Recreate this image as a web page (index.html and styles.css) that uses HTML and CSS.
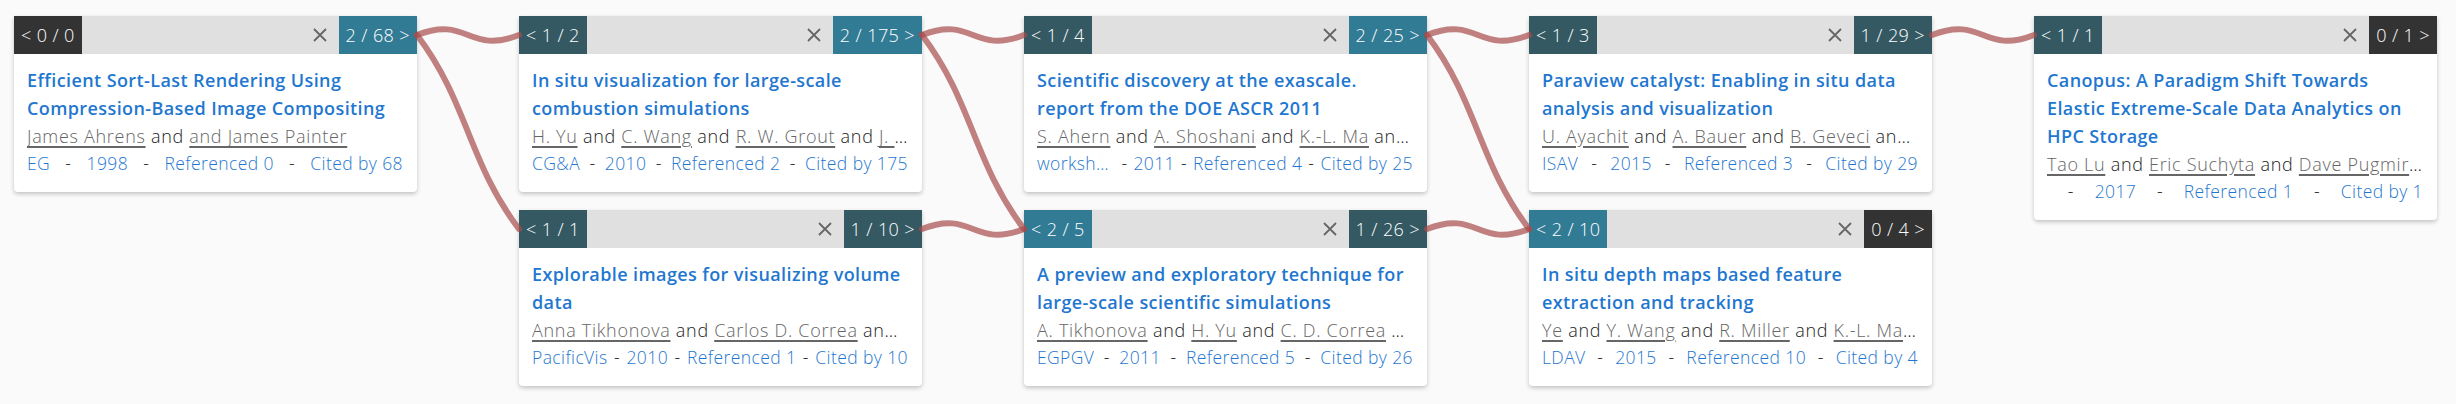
FILE: index.html
```html
<!DOCTYPE html>
<html lang="en">
<head>
    <meta charset="UTF-8">
    <meta name="viewport" content="width=device-width, initial-scale=1.0">
    <title>Citation Path</title>
    <link rel="stylesheet" href="styles.css">
</head>
<body>
    <div class="graph" id="graph">
        <div class="column">
            <div class="card" id="p1">
                <div class="card-head">
                    <span class="nav nav-none">&lt; 0 / 0</span>
                    <span class="close"><svg viewBox="0 0 14 14" width="14" height="14"><path d="M1 1 L13 13 M13 1 L1 13"/></svg></span>
                    <span class="nav nav-multi">2 / 68 &gt;</span>
                </div>
                <div class="card-body">
                    <a class="title" href="#">Efficient Sort-Last Rendering Using Compression-Based Image Compositing</a>
                    <div class="authors"><a href="#">James Ahrens</a> and <a href="#">and James Painter</a></div>
                    <div class="meta">
                        <a class="venue" href="#">EG</a><span>-</span><a href="#">1998</a><span>-</span><a href="#">Referenced 0</a><span>-</span><a href="#">Cited by 68</a>
                    </div>
                </div>
            </div>
        </div>

        <div class="column">
            <div class="card" id="p2">
                <div class="card-head">
                    <span class="nav nav-one">&lt; 1 / 2</span>
                    <span class="close"><svg viewBox="0 0 14 14" width="14" height="14"><path d="M1 1 L13 13 M13 1 L1 13"/></svg></span>
                    <span class="nav nav-multi">2 / 175 &gt;</span>
                </div>
                <div class="card-body">
                    <a class="title" href="#">In situ visualization for large-scale combustion simulations</a>
                    <div class="authors"><a href="#">H. Yu</a> and <a href="#">C. Wang</a> and <a href="#">R. W. Grout</a> and <a href="#">J. H. Chen</a> and <a href="#">K.-L. Ma</a></div>
                    <div class="meta">
                        <a class="venue" href="#">CG&amp;A</a><span>-</span><a href="#">2010</a><span>-</span><a href="#">Referenced 2</a><span>-</span><a href="#">Cited by 175</a>
                    </div>
                </div>
            </div>
            <div class="card" id="p2b">
                <div class="card-head">
                    <span class="nav nav-one">&lt; 1 / 1</span>
                    <span class="close"><svg viewBox="0 0 14 14" width="14" height="14"><path d="M1 1 L13 13 M13 1 L1 13"/></svg></span>
                    <span class="nav nav-one">1 / 10 &gt;</span>
                </div>
                <div class="card-body">
                    <a class="title" href="#">Explorable images for visualizing volume data</a>
                    <div class="authors"><a href="#">Anna Tikhonova</a> and <a href="#">Carlos D. Correa</a> and <a href="#">Kwan-Liu Ma</a></div>
                    <div class="meta">
                        <a class="venue" href="#">PacificVis</a><span>-</span><a href="#">2010</a><span>-</span><a href="#">Referenced 1</a><span>-</span><a href="#">Cited by 10</a>
                    </div>
                </div>
            </div>
        </div>

        <div class="column">
            <div class="card" id="p3">
                <div class="card-head">
                    <span class="nav nav-one">&lt; 1 / 4</span>
                    <span class="close"><svg viewBox="0 0 14 14" width="14" height="14"><path d="M1 1 L13 13 M13 1 L1 13"/></svg></span>
                    <span class="nav nav-multi">2 / 25 &gt;</span>
                </div>
                <div class="card-body">
                    <a class="title" href="#">Scientific discovery at the exascale. report from the DOE ASCR 2011</a>
                    <div class="authors"><a href="#">S. Ahern</a> and <a href="#">A. Shoshani</a> and <a href="#">K.-L. Ma</a> and <a href="#">A. Choudhary</a></div>
                    <div class="meta">
                        <a class="venue" href="#">workshop on exascale data management</a><span>-</span><a href="#">2011</a><span>-</span><a href="#">Referenced 4</a><span>-</span><a href="#">Cited by 25</a>
                    </div>
                </div>
            </div>
            <div class="card" id="p3b">
                <div class="card-head">
                    <span class="nav nav-multi">&lt; 2 / 5</span>
                    <span class="close"><svg viewBox="0 0 14 14" width="14" height="14"><path d="M1 1 L13 13 M13 1 L1 13"/></svg></span>
                    <span class="nav nav-one">1 / 26 &gt;</span>
                </div>
                <div class="card-body">
                    <a class="title" href="#">A preview and exploratory technique for large-scale scientific simulations</a>
                    <div class="authors"><a href="#">A. Tikhonova</a> and <a href="#">H. Yu</a> and <a href="#">C. D. Correa</a> and <a href="#">J. H. Chen</a></div>
                    <div class="meta">
                        <a class="venue" href="#">EGPGV</a><span>-</span><a href="#">2011</a><span>-</span><a href="#">Referenced 5</a><span>-</span><a href="#">Cited by 26</a>
                    </div>
                </div>
            </div>
        </div>

        <div class="column">
            <div class="card" id="p4">
                <div class="card-head">
                    <span class="nav nav-one">&lt; 1 / 3</span>
                    <span class="close"><svg viewBox="0 0 14 14" width="14" height="14"><path d="M1 1 L13 13 M13 1 L1 13"/></svg></span>
                    <span class="nav nav-one">1 / 29 &gt;</span>
                </div>
                <div class="card-body">
                    <a class="title" href="#">Paraview catalyst: Enabling in situ data analysis and visualization</a>
                    <div class="authors"><a href="#">U. Ayachit</a> and <a href="#">A. Bauer</a> and <a href="#">B. Geveci</a> and <a href="#">P. O'Leary</a></div>
                    <div class="meta">
                        <a class="venue" href="#">ISAV</a><span>-</span><a href="#">2015</a><span>-</span><a href="#">Referenced 3</a><span>-</span><a href="#">Cited by 29</a>
                    </div>
                </div>
            </div>
            <div class="card" id="p4b">
                <div class="card-head">
                    <span class="nav nav-multi">&lt; 2 / 10</span>
                    <span class="close"><svg viewBox="0 0 14 14" width="14" height="14"><path d="M1 1 L13 13 M13 1 L1 13"/></svg></span>
                    <span class="nav nav-none">0 / 4 &gt;</span>
                </div>
                <div class="card-body">
                    <a class="title" href="#">In situ depth maps based feature extraction and tracking</a>
                    <div class="authors"><a href="#">Ye</a> and <a href="#">Y. Wang</a> and <a href="#">R. Miller</a> and <a href="#">K.-L. Ma</a> and <a href="#">D. Pugmire</a></div>
                    <div class="meta">
                        <a class="venue" href="#">LDAV</a><span>-</span><a href="#">2015</a><span>-</span><a href="#">Referenced 10</a><span>-</span><a href="#">Cited by 4</a>
                    </div>
                </div>
            </div>
        </div>

        <div class="column">
            <div class="card" id="p5">
                <div class="card-head">
                    <span class="nav nav-one">&lt; 1 / 1</span>
                    <span class="close"><svg viewBox="0 0 14 14" width="14" height="14"><path d="M1 1 L13 13 M13 1 L1 13"/></svg></span>
                    <span class="nav nav-none">0 / 1 &gt;</span>
                </div>
                <div class="card-body">
                    <a class="title" href="#">Canopus: A Paradigm Shift Towards Elastic Extreme-Scale Data Analytics on HPC Storage</a>
                    <div class="authors"><a href="#">Tao Lu</a> and <a href="#">Eric Suchyta</a> and <a href="#">Dave Pugmire</a> and <a href="#">Jong Choi</a></div>
                    <div class="meta">
                        <a class="venue" href="#"></a><span>-</span><a href="#">2017</a><span>-</span><a href="#">Referenced 1</a><span>-</span><a href="#">Cited by 1</a>
                    </div>
                </div>
            </div>
        </div>

        <svg class="links" id="links"></svg>
    </div>

    <script>
        const LINKS = [
            ["p1", "p2"], ["p1", "p2b"],
            ["p2", "p3"], ["p2", "p3b"], ["p2b", "p3b"],
            ["p3", "p4"], ["p3", "p4b"], ["p3b", "p4b"],
            ["p4", "p5"]
        ];

        function drawLinks() {
            const graph = document.getElementById("graph");
            const svg = document.getElementById("links");
            const box = graph.getBoundingClientRect();
            svg.setAttribute("width", box.width);
            svg.setAttribute("height", box.height);
            svg.innerHTML = "";

            LINKS.forEach(([from, to]) => {
                const a = document.querySelector(`#${from} .card-head`).getBoundingClientRect();
                const b = document.querySelector(`#${to} .card-head`).getBoundingClientRect();
                const x1 = a.right - box.left, y1 = a.top + a.height / 2 - box.top;
                const x2 = b.left - box.left, y2 = b.top + b.height / 2 - box.top;
                const w = x2 - x1, dy = y2 - y1;
                const d = `M${x1},${y1} C${x1 + w / 2},${y1 + dy * 0.45 - 20} ${x2 - w / 2},${y2 - dy * 0.45 + 20} ${x2},${y2}`;
                const path = document.createElementNS("http://www.w3.org/2000/svg", "path");
                path.setAttribute("d", d);
                svg.appendChild(path);
            });
        }

        drawLinks();
    </script>
</body>
</html>
```

FILE: styles.css
```css
body {
    margin: 0;
    background-color: #fafafa;
    font-family: 'Open Sans', 'Lato', sans-serif;
    color: #222;
}

a {
    text-decoration: none;
}

.graph {
    position: relative;
    display: flex;
    align-items: flex-start;
    gap: 102px;
    padding: 16px 14px;
}

.column {
    display: flex;
    flex-direction: column;
    gap: 18px;
    width: 403px;
    flex: none;
}

.card {
    background-color: #ffffff;
    border-radius: 0 0 4px 4px;
    box-shadow: 0 2px 4px rgba(0, 0, 0, 0.22);
}

.card-head {
    display: flex;
    align-items: center;
    height: 38px;
    background-color: #e0e0e0;
}

.nav {
    padding: 0 7px;
    line-height: 38px;
    font-size: 18px;
    font-weight: 300;
    letter-spacing: 0.4px;
    color: #ffffff;
    white-space: nowrap;
}

.nav-none {
    background-color: #333333;
}

.nav-one {
    background-color: #345963;
}

.nav-multi {
    background-color: #327b95;
}

.close {
    margin-left: auto;
    margin-right: 12px;
    display: flex;
}

.close path {
    stroke: #666;
    stroke-width: 1.8;
    fill: none;
}

.card-body {
    padding: 12px 14px 15px 13px;
}

.title {
    display: block;
    font-size: 18px;
    font-weight: 600;
    letter-spacing: 0.4px;
    line-height: 28px;
    color: #1f77d0;
}

.authors {
    font-size: 18px;
    font-weight: 300;
    letter-spacing: 0.7px;
    line-height: 28px;
    white-space: nowrap;
    overflow: hidden;
    text-overflow: ellipsis;
}

.authors a {
    color: #666;
    text-decoration: underline;
    text-decoration-thickness: 1.5px;
    text-underline-offset: 3px;
}

.meta {
    display: flex;
    justify-content: space-between;
    gap: 6px;
    font-size: 17.5px;
    font-weight: 300;
    letter-spacing: 0.4px;
    line-height: 27px;
    white-space: nowrap;
}

.meta a {
    color: #1f77d0;
    flex: none;
}

.meta .venue {
    flex: 0 1 auto;
    min-width: 0;
    overflow: hidden;
    text-overflow: ellipsis;
}

.links {
    position: absolute;
    left: 0;
    top: 0;
    pointer-events: none;
}

.links path {
    fill: none;
    stroke: rgb(168, 76, 76);
    stroke-opacity: 0.7;
    stroke-width: 6;
    stroke-linecap: round;
}
```
